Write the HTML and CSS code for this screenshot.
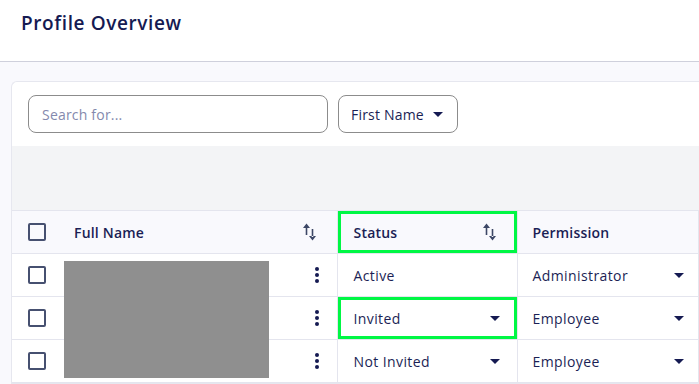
FILE: index.html
```html
<!DOCTYPE html>
<html lang="en">
<head>
  <meta charset="UTF-8">
  <title>Profile Overview</title>
  <link rel="stylesheet" href="styles.css">
</head>
<body>
  <header class="topbar">
    <h1>Profile Overview</h1>
  </header>

  <main class="content">
    <section class="card">
      <div class="toolbar">
        <input class="search" type="text" placeholder="Search for...">
        <button class="filter">First Name <span class="caret"></span></button>
      </div>

      <div class="band"></div>

      <table class="grid">
        <colgroup>
          <col class="c-check">
          <col class="c-name">
          <col class="c-status">
          <col class="c-perm">
          <col>
        </colgroup>
        <thead>
          <tr>
            <th class="check"><span class="box"></span></th>
            <th><div class="cell">Full Name <svg class="sort" viewBox="0 0 13 18"><path d="M0 5 3.5 0.5 7 5ZM2.7 4h1.6v8H2.7ZM8.7 6h1.6v8H8.7ZM6 13 9.5 17.5 13 13Z"/></svg></div></th>
            <th class="hl"><div class="cell">Status <svg class="sort" viewBox="0 0 13 18"><path d="M0 5 3.5 0.5 7 5ZM2.7 4h1.6v8H2.7ZM8.7 6h1.6v8H8.7ZM6 13 9.5 17.5 13 13Z"/></svg></div></th>
            <th class="perm"><div class="cell">Permission</div></th>
            <th></th>
          </tr>
        </thead>
        <tbody>
          <tr>
            <td class="check"><span class="box"></span></td>
            <td class="name"><div class="redact"></div><div class="cell end"><span class="kebab"><i></i><i></i><i></i></span></div></td>
            <td><div class="cell">Active</div></td>
            <td class="perm"><div class="cell">Administrator <span class="caret"></span></div></td>
            <td></td>
          </tr>
          <tr>
            <td class="check"><span class="box"></span></td>
            <td class="name"><div class="cell end"><span class="kebab"><i></i><i></i><i></i></span></div></td>
            <td class="hl"><div class="cell">Invited <span class="caret"></span></div></td>
            <td class="perm"><div class="cell">Employee <span class="caret"></span></div></td>
            <td></td>
          </tr>
          <tr>
            <td class="check"><span class="box"></span></td>
            <td class="name"><div class="cell end"><span class="kebab"><i></i><i></i><i></i></span></div></td>
            <td><div class="cell">Not Invited <span class="caret"></span></div></td>
            <td class="perm"><div class="cell">Employee <span class="caret"></span></div></td>
            <td></td>
          </tr>
        </tbody>
      </table>
    </section>
  </main>
</body>
</html>
```

FILE: styles.css
```css
* {
  box-sizing: border-box;
}

body {
  margin: 0;
  font-family: 'Open Sans', sans-serif;
  color: #1b1f55;
  background: #f9f9fd;
  overflow: hidden;
}

.topbar {
  height: 62px;
  background: #fff;
  border-bottom: 1px solid #cfd0dc;
  padding: 10px 21px;
}

.topbar h1 {
  margin: 0;
  font-size: 19px;
  font-weight: 600;
  letter-spacing: 0.6px;
  color: #151a52;
}

.content {
  padding: 19px 0 0 11px;
}

.card {
  background: #fff;
  border: 1px solid #e6e7ef;
  border-right: none;
  border-radius: 6px 0 0 0;
}

.toolbar {
  display: flex;
  gap: 10px;
  padding: 13px 16px 13px 16px;
}

.search {
  width: 300px;
  height: 38px;
  border: 1px solid #8c8c8c;
  border-radius: 8px;
  padding: 0 13px;
  font-family: inherit;
  font-size: 14px;
  letter-spacing: 0.2px;
  color: #1b1f55;
}

.search::placeholder {
  color: #8489ad;
}

.filter {
  height: 38px;
  width: 120px;
  border: 1px solid #8c8c8c;
  border-radius: 8px;
  background: #fff;
  font-family: inherit;
  font-size: 14px;
  letter-spacing: 0.2px;
  white-space: nowrap;
  color: #1b1f55;
  display: flex;
  align-items: center;
  gap: 9px;
  padding: 0 12px;
}

.caret {
  display: inline-block;
  width: 0;
  height: 0;
  border-left: 5px solid transparent;
  border-right: 5px solid transparent;
  border-top: 5px solid #151a52;
}

.band {
  height: 64px;
  background: #f3f4f6;
}

.grid {
  width: 700px;
  border-collapse: collapse;
  table-layout: fixed;
  font-size: 14px;
  letter-spacing: 0.4px;
}

.c-check { width: 48px; }
.c-name { width: 277px; }
.c-status { width: 180px; }
.c-perm { width: 181px; }

.grid th,
.grid td {
  height: 43px;
  padding: 0;
  border-bottom: 1px solid #e4e5ee;
  border-left: 1px solid #e4e5ee;
  text-align: left;
}

.grid th.check,
.grid td.check,
.grid th:nth-child(2),
.grid td.name {
  border-left: none;
}

.grid thead th {
  background: #f9f9fd;
  border-top: 1px solid #e4e5ee;
  font-weight: 600;
  letter-spacing: 0.2px;
}

.cell {
  display: flex;
  align-items: center;
  justify-content: space-between;
  padding: 0 17px 0 16px;
}

.grid th:nth-child(2) .cell {
  padding-left: 14px;
  padding-right: 21px;
}

.grid th.hl .cell {
  padding-right: 21px;
}

.grid td.perm .cell,
.grid th.perm .cell {
  padding-left: 15px;
  padding-right: 14px;
}

.end {
  justify-content: flex-end;
  padding-right: 18px;
}

.box {
  display: block;
  width: 18px;
  height: 18px;
  margin-left: 16px;
  border: 2px solid #465070;
  border-radius: 2px;
}

.sort {
  width: 13px;
  height: 18px;
  fill: #3d4766;
}

.kebab {
  display: flex;
  flex-direction: column;
  gap: 2px;
}

.kebab i {
  width: 4px;
  height: 4px;
  border-radius: 50%;
  background: #151a52;
}

td.name {
  position: relative;
}

.redact {
  position: absolute;
  left: 4px;
  top: 7px;
  width: 205px;
  height: 117px;
  background: #8f8f8f;
  z-index: 1;
}

.hl {
  box-shadow: inset 0 0 0 3px #00f744;
}
```
